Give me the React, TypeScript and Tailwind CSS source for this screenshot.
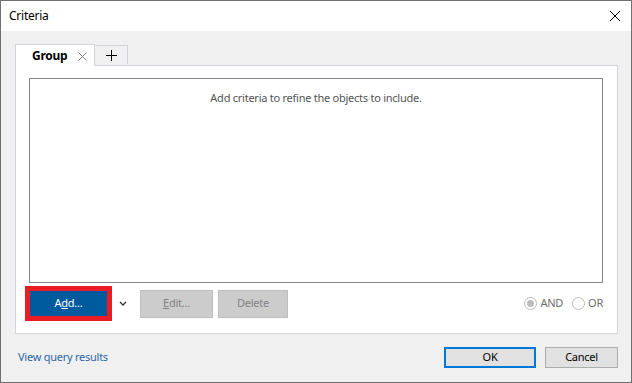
import React, { useState } from 'react';

export default function App() {
  const [mode, setMode] = useState<'and' | 'or'>('and');

  return (
    <div className="w-[632px] h-[383px] flex flex-col border border-[#6f6f6f] bg-[#f0f0f0] text-[11px] tracking-[-0.25px] text-black overflow-hidden" style={{ fontFamily: '"Noto Sans", "Open Sans", sans-serif' }}>
      {/* Title bar */}
      <div className="h-[30px] bg-white flex items-center justify-between pl-[8px] pr-[8px] shrink-0">
        <span className="text-[12px]">Criteria</span>
        <button className="w-[16px] h-[16px] flex items-center justify-center">
          <svg width="12" height="12" viewBox="0 0 12 12"><path d="M1 1 L11 11 M11 1 L1 11" stroke="#000" strokeWidth="1" /></svg>
        </button>
      </div>

      {/* Body */}
      <div className="flex-1 flex flex-col pl-[14px] pr-[13px] pt-[13px]">
        {/* Tabs */}
        <div className="flex items-start h-[21px] relative z-10">
          <div className="w-[80px] h-[22px] bg-white border border-b-0 border-[#d3d3dc] flex items-center pl-[16px] gap-[11px]">
            <span className="font-bold text-[12px]">Group</span>
            <svg width="9" height="9" viewBox="0 0 9 9" className="mt-[1px]"><path d="M0.5 0.5 L8.5 8.5 M8.5 0.5 L0.5 8.5" stroke="#7a7a7a" strokeWidth="1" /></svg>
          </div>
          <div className="w-[33px] h-[19px] mt-[1px] border border-l-0 border-b-0 border-[#d3d3dc] flex items-center justify-center">
            <svg width="11" height="11" viewBox="0 0 11 11"><path d="M5.5 0 V11 M0 5.5 H11" stroke="#000" strokeWidth="1" /></svg>
          </div>
        </div>

        {/* Panel */}
        <div className="h-[269px] bg-white border border-[#d3d3dc] flex flex-col pl-[13px] pr-[14px] pt-[12px]">
          <div className="h-[205px] border border-[#828790] flex justify-center pt-[11px]">
            <span className="text-[#555]">Add criteria to refine the objects to include.</span>
          </div>
          <div className="flex items-center mt-[3px] -ml-[4px]">
            <div className="border-[5px] border-[#ec1c24] w-[87px] h-[35px]">
              <button className="w-full h-full bg-[#005a9e] text-white">
                A<span className="underline">d</span>d...
              </button>
            </div>
            <svg width="8" height="6" viewBox="0 0 8 6" className="ml-[7px]"><path d="M1 1 L4 4 L7 1" stroke="#333" strokeWidth="1.3" fill="none" /></svg>
            <button className="ml-[13px] w-[73px] h-[28px] bg-[#cccccc] border border-[#bfbfbf] text-[#838383]">
              <span className="underline">E</span>dit...
            </button>
            <button className="ml-[5px] w-[70px] h-[28px] bg-[#cccccc] border border-[#bfbfbf] text-[#838383]">
              Delete
            </button>
            <div className="ml-auto flex items-center gap-[5px] text-[#6d6d6d]">
              <button className="flex items-center gap-[3px]" onClick={() => setMode('and')}>
                <span className="w-[13px] h-[13px] rounded-full border border-[#bcbcbc] bg-white flex items-center justify-center">
                  {mode === 'and' && <span className="w-[7px] h-[7px] rounded-full bg-[#bcbcbc]" />}
                </span>
                <span>AND</span>
              </button>
              <button className="flex items-center gap-[3px] ml-[4px]" onClick={() => setMode('or')}>
                <span className="w-[13px] h-[13px] rounded-full border border-[#bcbcbc] bg-white flex items-center justify-center">
                  {mode === 'or' && <span className="w-[7px] h-[7px] rounded-full bg-[#bcbcbc]" />}
                </span>
                <span>OR</span>
              </button>
            </div>
          </div>
        </div>

        {/* Footer */}
        <div className="flex items-center mt-[13px]">
          <a className="ml-[3px] text-[#2b67a8] cursor-pointer">View query results</a>
          <button className="ml-auto w-[92px] h-[21px] bg-[#e1e1e1] border-2 border-[#0078d7]">OK</button>
          <button className="ml-[9px] w-[73px] h-[21px] bg-[#e1e1e1] border border-[#adadad]">Cancel</button>
        </div>
      </div>
    </div>
  );
}
